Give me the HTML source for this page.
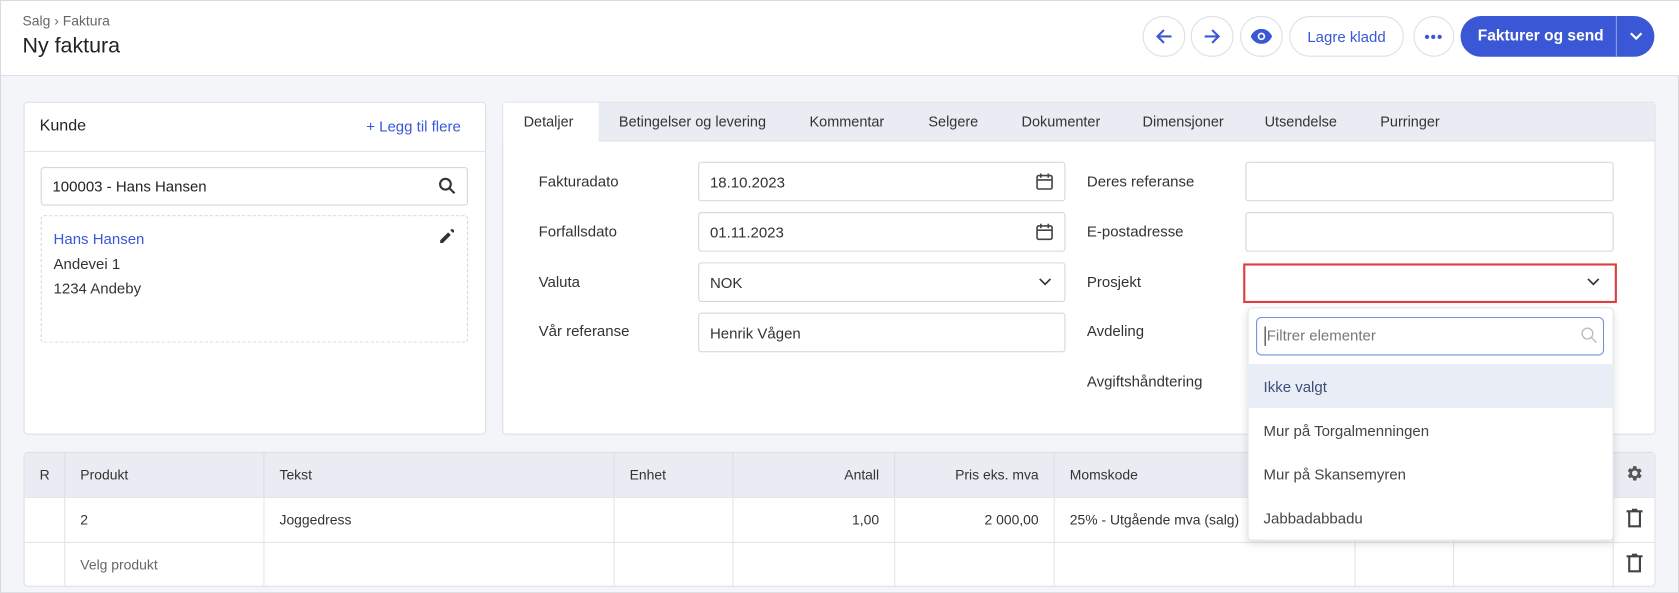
<!DOCTYPE html>
<html><head><meta charset="utf-8"><style>
*{box-sizing:border-box;margin:0;padding:0}
html,body{width:1679px;height:593px;overflow:hidden;background:#f3f5f8}
#w{width:1568px;height:554px;transform:scale(1.0708);transform-origin:0 0;position:relative;font-family:"Liberation Sans",sans-serif;color:#333;font-size:14px;background:#f3f5f8;border:1px solid #d8dbe0}
.a{position:absolute}
.hdr{left:0;top:0;width:1568px;height:70px;background:#fff;border-bottom:1px solid #dde0e5}
.cb{width:40px;height:38px;border:1px solid #dcdfe4;border-radius:20px;top:14px;background:#fff;display:flex;align-items:center;justify-content:center}
.card{background:#fff;border:1px solid #dcdfe4;border-radius:4px}
.inp{background:#fff;border:1px solid #d3d6db;border-radius:3px;height:37px;display:flex;align-items:center;padding-left:10px}
.lbl{font-size:14px;color:#333}
.tab{top:105px;font-size:13.5px;color:#333}
.th{top:421px;height:42px;border-right:1px solid #dcdfe4;font-size:13px;display:flex;align-items:center;padding:0 14px}
.td{height:42px;border-right:1px solid #e2e4e8;border-top:1px solid #e2e4e8;font-size:13px;display:flex;align-items:center;padding:0 14px}
.it{left:1164px;width:342px;height:41px;padding-left:15px;display:flex;align-items:center;font-size:14px;color:#444}
</style></head><body><div id="w">
<div class="a hdr"></div>
<div class="a" style="left:20px;top:11px;font-size:13px;color:#666">Salg › Faktura</div>
<div class="a" style="left:20px;top:31px;font-size:20px;color:#222">Ny faktura</div>
<div class="a cb" style="left:1066px"><svg width="18" height="18" viewBox="0 0 18 18" fill="none" stroke="#3a57d6" stroke-width="2"><path d="M16 9H3M9 3L3 9l6 6"/></svg></div>
<div class="a cb" style="left:1111px"><svg width="18" height="18" viewBox="0 0 18 18" fill="none" stroke="#3a57d6" stroke-width="2"><path d="M2 9h13M9 3l6 6-6 6"/></svg></div>
<div class="a cb" style="left:1157px"><svg width="20" height="14" viewBox="0 0 20 14"><path d="M10 0C5 0 1.5 3.5 0 7c1.5 3.5 5 7 10 7s8.5-3.5 10-7C18.5 3.5 15 0 10 0z" fill="#3a57d6"/><circle cx="10" cy="7" r="3.5" fill="#fff"/><circle cx="10" cy="7" r="2" fill="#3a57d6"/></svg></div>
<div class="a cb" style="left:1203px;width:107px;font-size:14px;color:#3a57d6">Lagre kladd</div>
<div class="a cb" style="left:1319px;width:38px;color:#3a57d6;font-size:14px;font-weight:bold;letter-spacing:1px">•••</div>
<div class="a" style="left:1363px;top:14px;width:181px;height:38px;border-radius:19px;background:#3a57d6;color:#fff;font-size:14.5px;font-weight:bold"><span class="a" style="left:16px;top:11px">Fakturer og send</span><div class="a" style="left:145px;top:0;width:1px;height:38px;background:#8fa2ea"></div><svg class="a" style="left:157px;top:13px" width="14" height="12" viewBox="0 0 14 12" fill="none" stroke="#fff" stroke-width="2"><path d="M2 3l5 5 5-5"/></svg></div>

<div class="a card" style="left:21px;top:94px;width:432px;height:311px"></div>
<div class="a" style="left:36px;top:108px;font-size:15px;color:#222">Kunde</div>
<div class="a" style="left:341px;top:109px;font-size:14px;color:#3a57d6">+ Legg til flere</div>
<div class="a" style="left:22px;top:140px;width:430px;height:1px;background:#e2e4e8"></div>
<div class="a inp" style="left:37px;top:155px;width:399px;height:36px;font-size:14px;color:#222">100003 - Hans Hansen</div>
<svg class="a" style="left:408px;top:164px" width="17" height="17" viewBox="0 0 17 17" fill="none" stroke="#333" stroke-width="2"><circle cx="7" cy="7" r="5"/><path d="M11 11l4.5 4.5"/></svg>
<div class="a" style="left:37px;top:200px;width:399px;height:119px;border:1px dashed #d3d6db;border-radius:3px"></div>
<div class="a" style="left:49px;top:211px;font-size:14px;color:#3a57d6;line-height:23px">Hans Hansen</div>
<div class="a" style="left:49px;top:234px;font-size:14px;color:#333;line-height:23px">Andevei 1<br>1234 Andeby</div>
<svg class="a" style="left:410px;top:213px" width="13" height="13" viewBox="0 0 13 13"><path d="M0 10.5V13h2.5L10 5.5 7.5 3zM12 3.5l-2.5-2.5 1-1a1 1 0 011.4 0l1.1 1.1a1 1 0 010 1.4z" fill="#333"/></svg>

<div class="a card" style="left:468px;top:94px;width:1077px;height:311px"></div>
<div class="a" style="left:469px;top:95px;width:1075px;height:36px;background:#e9ecf2;border-bottom:1px solid #dcdfe4"></div>
<div class="a" style="left:469px;top:95px;width:89px;height:37px;background:#fff"></div>
<div class="a tab" style="left:488px">Detaljer</div>
<div class="a tab" style="left:577px">Betingelser og levering</div>
<div class="a tab" style="left:755px">Kommentar</div>
<div class="a tab" style="left:866px">Selgere</div>
<div class="a tab" style="left:953px">Dokumenter</div>
<div class="a tab" style="left:1066px">Dimensjoner</div>
<div class="a tab" style="left:1180px">Utsendelse</div>
<div class="a tab" style="left:1288px">Purringer</div>

<div class="a lbl" style="left:502px;top:160px">Fakturadato</div>
<div class="a lbl" style="left:502px;top:207px">Forfallsdato</div>
<div class="a lbl" style="left:502px;top:254px">Valuta</div>
<div class="a lbl" style="left:502px;top:300px">Vår referanse</div>
<div class="a inp" style="left:651px;top:150px;width:343px">18.10.2023</div>
<div class="a inp" style="left:651px;top:197px;width:343px">01.11.2023</div>
<div class="a inp" style="left:651px;top:244px;width:343px">NOK</div>
<div class="a inp" style="left:651px;top:291px;width:343px">Henrik Vågen</div>
<svg class="a" style="left:966px;top:160px" width="17" height="17" viewBox="0 0 17 17" fill="none" stroke="#444" stroke-width="1.5"><rect x="1.5" y="3" width="14" height="12.5" rx="1.5"/><path d="M1.5 7h14M5 1v4M12 1v4"/></svg>
<svg class="a" style="left:966px;top:207px" width="17" height="17" viewBox="0 0 17 17" fill="none" stroke="#444" stroke-width="1.5"><rect x="1.5" y="3" width="14" height="12.5" rx="1.5"/><path d="M1.5 7h14M5 1v4M12 1v4"/></svg>
<svg class="a" style="left:969px;top:258px" width="12" height="8" viewBox="0 0 12 8" fill="none" stroke="#333" stroke-width="1.6"><path d="M1 1.5l5 5 5-5"/></svg>

<div class="a lbl" style="left:1014px;top:160px">Deres referanse</div>
<div class="a lbl" style="left:1014px;top:207px">E-postadresse</div>
<div class="a lbl" style="left:1014px;top:254px">Prosjekt</div>
<div class="a lbl" style="left:1014px;top:300px">Avdeling</div>
<div class="a lbl" style="left:1014px;top:347px">Avgiftshåndtering</div>
<div class="a inp" style="left:1162px;top:150px;width:344px"></div>
<div class="a inp" style="left:1162px;top:197px;width:344px"></div>
<div class="a" style="left:1160px;top:245px;width:349px;height:37px;border:2px solid #d9403f"></div>
<svg class="a" style="left:1481px;top:258px" width="12" height="8" viewBox="0 0 12 8" fill="none" stroke="#333" stroke-width="1.6"><path d="M1 1.5l5 5 5-5"/></svg>

<div class="a card" style="left:21px;top:421px;width:1524px;height:126px;overflow:hidden"></div>
<div class="a" style="left:22px;top:422px;width:1522px;height:41px;background:#e9ecf2"></div>
<div class="a th" style="left:22px;width:38px;padding:0 14px">R</div>
<div class="a th" style="left:60px;width:186px">Produkt</div>
<div class="a th" style="left:246px;width:327px">Tekst</div>
<div class="a th" style="left:573px;width:111px">Enhet</div>
<div class="a th" style="left:684px;width:151px;justify-content:flex-end">Antall</div>
<div class="a th" style="left:835px;width:149px;justify-content:flex-end">Pris eks. mva</div>
<div class="a th" style="left:984px;width:281px">Momskode</div>
<div class="a th" style="left:1265px;width:92px"></div>
<div class="a th" style="left:1357px;width:149px"></div>
<svg class="a" style="left:1516px;top:432px" width="18" height="18" viewBox="0 0 24 24"><path fill="#555" d="M19.4 13a7.5 7.5 0 000-2l2.1-1.6-2-3.5-2.5 1a7.6 7.6 0 00-1.7-1L14.9 3h-4l-.4 2.7a7.6 7.6 0 00-1.7 1l-2.5-1-2 3.5L6.4 11a7.5 7.5 0 000 2l-2.1 1.6 2 3.5 2.5-1c.5.4 1.1.7 1.7 1l.4 2.9h4l.4-2.7c.6-.3 1.2-.6 1.7-1l2.5 1 2-3.5zM12.9 15.5a3.5 3.5 0 110-7 3.5 3.5 0 010 7z"/></svg>
<div class="a td" style="left:22px;top:463px;width:38px"></div>
<div class="a td" style="left:60px;top:463px;width:186px">2</div>
<div class="a td" style="left:246px;top:463px;width:327px">Joggedress</div>
<div class="a td" style="left:573px;top:463px;width:111px"></div>
<div class="a td" style="left:684px;top:463px;width:151px;justify-content:flex-end">1,00</div>
<div class="a td" style="left:835px;top:463px;width:149px;justify-content:flex-end">2 000,00</div>
<div class="a td" style="left:984px;top:463px;width:281px;white-space:nowrap;overflow:hidden">25% - Utgående mva (salg)</div>
<div class="a td" style="left:1265px;top:463px;width:92px"></div>
<div class="a td" style="left:1357px;top:463px;width:149px"></div>
<div class="a td" style="left:22px;top:505px;width:38px"></div>
<div class="a td" style="left:60px;top:505px;width:186px;color:#666">Velg produkt</div>
<div class="a td" style="left:246px;top:505px;width:327px"></div>
<div class="a td" style="left:573px;top:505px;width:111px"></div>
<div class="a td" style="left:684px;top:505px;width:151px"></div>
<div class="a td" style="left:835px;top:505px;width:149px"></div>
<div class="a td" style="left:984px;top:505px;width:281px"></div>
<div class="a td" style="left:1265px;top:505px;width:92px"></div>
<div class="a td" style="left:1357px;top:505px;width:149px"></div>
<div class="a" style="left:1506px;top:463px;width:38px;height:1px;background:#e2e4e8"></div>
<div class="a" style="left:1506px;top:505px;width:38px;height:1px;background:#e2e4e8"></div>
<svg class="a" style="left:1518px;top:474px" width="15" height="18" viewBox="0 0 15 18" fill="none" stroke="#444" stroke-width="2"><path d="M0 2.5h15M5 1h5M2.5 3v13.5h10V3"/></svg>
<svg class="a" style="left:1518px;top:516px" width="15" height="18" viewBox="0 0 15 18" fill="none" stroke="#444" stroke-width="2"><path d="M0 2.5h15M5 1h5M2.5 3v13.5h10V3"/></svg>

<div class="a" style="left:1164px;top:286px;width:342px;height:218px;background:#fff;border:1px solid #e3e5e9;border-radius:4px;box-shadow:0 3px 8px rgba(0,0,0,.12)"></div>
<div class="a" style="left:1172px;top:295px;width:325px;height:36px;border:1.5px solid #6e93d8;border-radius:5px;background:#fff"></div>
<div class="a" style="left:1180px;top:304px;width:1px;height:18px;background:#222"></div>
<div class="a" style="left:1182px;top:304px;font-size:14px;color:#777">Filtrer elementer</div>
<svg class="a" style="left:1475px;top:304px" width="16" height="16" viewBox="0 0 16 16" fill="none" stroke="#bbb" stroke-width="1.3"><circle cx="6.5" cy="6.5" r="5"/><path d="M10 10l5 5"/></svg>
<div class="a it" style="top:339px;background:#e9edf5;color:#3d4e7a">Ikke valgt</div>
<div class="a it" style="top:380px">Mur på Torgalmenningen</div>
<div class="a it" style="top:421px">Mur på Skansemyren</div>
<div class="a it" style="top:462px">Jabbadabbadu</div>
</div></body></html>
